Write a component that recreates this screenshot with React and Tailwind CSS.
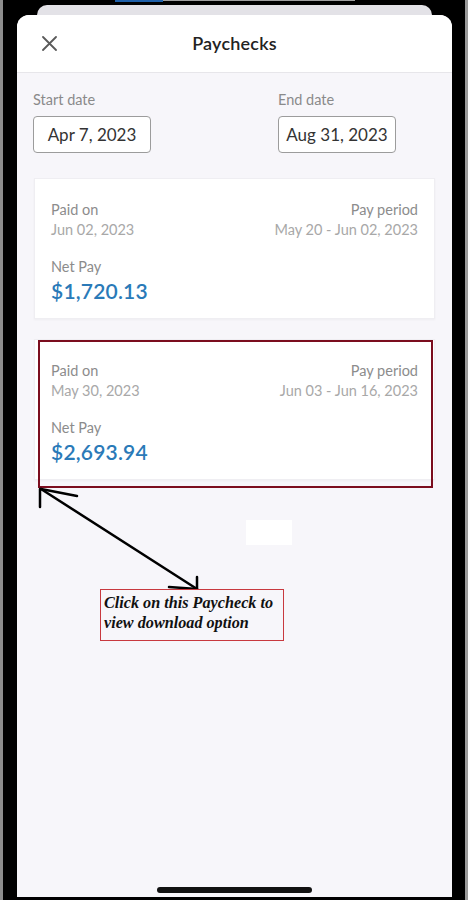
import React from "react";

function Card({ paid, period, amount }) {
  return (
    <div className="mx-[17px] bg-white border border-[#efeef2] shadow-[0_1px_2px_rgba(0,0,0,0.04)] px-[16px] pt-[21px] pb-[15px] h-[141px]">
      <div className="flex justify-between text-[14.5px] leading-[20px]">
        <div>
          <div className="text-[#8c8c8c]">Paid on</div>
          <div className="text-[#a8a8a8]">{paid}</div>
        </div>
        <div className="text-right">
          <div className="text-[#8c8c8c]">Pay period</div>
          <div className="text-[#a8a8a8]">{period}</div>
        </div>
      </div>
      <div className="mt-[17px] text-[14.5px] leading-[20px] text-[#8c8c8c]">Net Pay</div>
      <div className="text-[21px] leading-[28px] font-semibold text-[#2a7ab8] tracking-[0.2px]">{amount}</div>
    </div>
  );
}

export default function App() {
  return (
    <div
      className="relative h-[900px] w-[468px] overflow-hidden bg-black border-l-[3px] border-r-[3px] border-l-[#8d8d8d] border-r-[#9a9a9a] pl-[14px] pr-[13px] flex flex-col"
      style={{ fontFamily: "Lato, 'Noto Sans', sans-serif" }}
    >
      <div className="h-[5px] flex items-start">
        <div className="ml-[98px] w-[48px] h-[2px] bg-[#1e5fa8]" />
        <div className="w-[192px] h-[1px] bg-[#a0a0a0]" />
      </div>
      <div className="h-[10px] mx-[20px] bg-[#e3e2e7] rounded-t-[10px]" />
      <div className="flex-1 mb-[3px] bg-[#f7f6fa] rounded-t-[12px] overflow-hidden flex flex-col">
        <div className="h-[58px] bg-white border-b border-[#e7e6ea] relative flex items-center justify-center">
          <svg className="absolute left-[25px] top-[21px]" width="15" height="15" viewBox="0 0 15 15">
            <path d="M1 1 L14 14 M14 1 L1 14" stroke="#5a5a5a" strokeWidth="1.8" strokeLinecap="round" />
          </svg>
          <div className="text-[18px] font-semibold text-[#222] tracking-[0.2px]">Paychecks</div>
        </div>
        <div className="flex px-[16px] pt-[17px]">
          <div className="w-[245px]">
            <div className="text-[14.5px] leading-[20px] text-[#8a8a8a]">Start date</div>
            <div className="mt-[6px] w-[118px] h-[37px] border border-[#9c9c9c] rounded-[4px] bg-white flex items-center justify-center text-[17px] text-[#333]">
              Apr 7, 2023
            </div>
          </div>
          <div>
            <div className="text-[14.5px] leading-[20px] text-[#8a8a8a]">End date</div>
            <div className="mt-[6px] w-[118px] h-[37px] border border-[#9c9c9c] rounded-[4px] bg-white flex items-center justify-center text-[17px] text-[#333]">
              Aug 31, 2023
            </div>
          </div>
        </div>
        <div className="mt-[25px]">
          <Card paid="Jun 02, 2023" period="May 20 - Jun 02, 2023" amount="$1,720.13" />
        </div>
        <div className="mt-[20px]">
          <Card paid="May 30, 2023" period="Jun 03 - Jun 16, 2023" amount="$2,693.94" />
        </div>
        <div className="flex-1" />
        <div className="mx-auto mb-[4px] w-[155px] h-[6px] rounded-full bg-[#111]" />
      </div>

      {/* annotations */}
      <div className="absolute left-[35px] top-[340px] w-[395px] h-[148px] border-2 border-[#7b0d1e]" />
      <div className="absolute left-[243px] top-[520px] w-[46px] h-[25px] bg-white" />
      <svg className="absolute top-0" width="468" height="900" viewBox="0 0 468 900" style={{ left: -3 }}>
        <g stroke="#000" strokeWidth="2.5" strokeLinecap="round" fill="none">
          <path d="M41 489 L197 589" />
          <path d="M40 489 L40 507" />
          <path d="M41 489 L77 496" />
          <path d="M197 589 L197 577" />
          <path d="M197 589 L169 587" />
        </g>
      </svg>
      <div
        className="absolute left-[97px] top-[589px] w-[184px] h-[52px] border border-[#c8393f] bg-[#f7f6fa] pl-[3px] pt-[3px] text-[16.2px] leading-[20px] font-bold italic text-[#111]"
        style={{ fontFamily: "'Liberation Serif', serif" }}
      >
        Click on this Paycheck to view download option
      </div>
    </div>
  );
}
